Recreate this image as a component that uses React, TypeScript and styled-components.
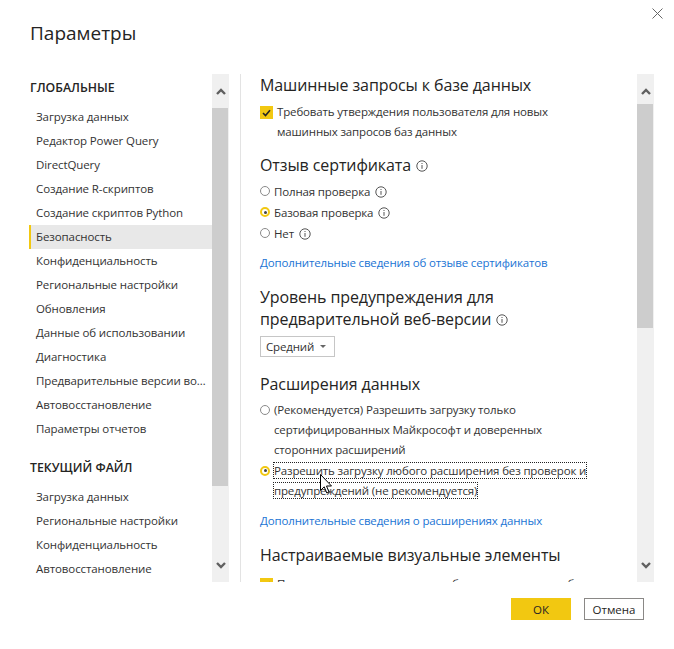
import React from "react";
import styled, { createGlobalStyle } from "styled-components";

const Global = createGlobalStyle`
  html, body { margin: 0; padding: 0; background: #fff; }
  body { font-family: "Open Sans", "Noto Sans", sans-serif; color: #252423; }
  #root { width: 674px; height: 649px; }
`;

const Dialog = styled.div`
  width: 674px;
  height: 649px;
  box-sizing: border-box;
  display: flex;
  flex-direction: column;
  padding: 0 20px 0 29px;
`;

const Header = styled.header`
  height: 74px;
  display: flex;
  justify-content: space-between;
  align-items: flex-start;
  margin-right: -20px;
`;

const Title = styled.h1`
  margin: 20px 0 0 1px;
  font-size: 19px;
  line-height: 26px;
  font-weight: 400;
  color: #252423;
`;

const CloseButton = styled.button`
  margin: 8px 11px 0 0;
  padding: 0;
  border: 0;
  background: none;
  width: 11px;
  height: 11px;
  display: flex;
`;

const Body = styled.div`
  height: 508px;
  display: flex;
`;

const LeftPane = styled.div`
  width: 200px;
  display: flex;
  flex-shrink: 0;
`;

const Nav = styled.nav`
  flex: 1;
  overflow: hidden;
`;

const NavGroupTitle = styled.div<{ $first?: boolean }>`
  height: 24px;
  line-height: 24px;
  margin: ${(p) => (p.$first ? "2px 0 5px" : "15px 0 5px")};
  padding-left: 1px;
  font-size: 12.3px;
  font-weight: 600;
  color: #252423;
`;

const NavItem = styled.div<{ $active?: boolean }>`
  height: 24px;
  line-height: 24px;
  padding: 0 6px 0 7px;
  font-size: 11.5px;
  letter-spacing: -0.1px;
  color: #333;
  white-space: nowrap;
  overflow: hidden;
  text-overflow: ellipsis;
  background: ${(p) => (p.$active ? "#e8e8e8" : "transparent")};
  box-shadow: ${(p) => (p.$active ? "inset 2px 0 0 #f2c811" : "none")};
`;

const Bar = styled.div`
  width: 17px;
  flex-shrink: 0;
  background: #f0f0f0;
  display: flex;
  flex-direction: column;
`;

const ArrowCell = styled.div`
  height: 34px;
  display: flex;
  align-items: center;
  justify-content: center;
`;

const Track = styled.div`
  flex: 1;
`;

const Thumb = styled.div<{ $top: number; $h: number }>`
  margin-top: ${(p) => p.$top}px;
  height: ${(p) => p.$h}px;
  margin-right: 1px;
  background: #cdcdcd;
`;

const Divider = styled.div`
  width: 1px;
  margin-left: 11px;
  background: #e3e3e3;
  flex-shrink: 0;
`;

const RightPane = styled.div`
  flex: 1;
  display: flex;
  min-width: 0;
`;

const Content = styled.div`
  flex: 1;
  overflow: hidden;
  padding-left: 19px;
  position: relative;
`;

const Inner = styled.div`
  max-width: 338px;
`;

const SectionTitle = styled.h2<{ $mt: number }>`
  margin: ${(p) => p.$mt}px 0 0;
  font-size: 16px;
  letter-spacing: -0.1px;
  line-height: 22px;
  font-weight: 400;
  color: #252423;
`;

const CheckRow = styled.div<{ $mt: number; $single?: boolean }>`
  margin-top: ${(p) => p.$mt}px;
  display: flex;
  align-items: flex-start;
  font-size: 11.5px;
  letter-spacing: -0.15px;
  line-height: 19.5px;
  color: #333;
  white-space: ${(p) => (p.$single ? "nowrap" : "normal")};
`;

const CheckBox = styled.span`
  width: 13px;
  height: 13px;
  flex-shrink: 0;
  margin: 4px 4px 0 0;
  background: #f2c811;
  display: flex;
  align-items: center;
  justify-content: center;
`;

const RadioGroup = styled.div<{ $mt: number; $lh: number; $gap: number }>`
  margin-top: ${(p) => p.$mt}px;
  display: flex;
  flex-direction: column;
  gap: ${(p) => p.$gap}px;
  font-size: 11.5px;
  letter-spacing: -0.15px;
  line-height: ${(p) => p.$lh}px;
  color: #333;
`;

const RadioRow = styled.div`
  display: flex;
  align-items: flex-start;
`;

const RadioDot = styled.span<{ $checked?: boolean; $lh: number }>`
  width: 10px;
  height: 10px;
  flex-shrink: 0;
  box-sizing: border-box;
  border-radius: 50%;
  margin: ${(p) => (p.$lh - 11) / 2}px 4px 0 0;
  border: ${(p) => (p.$checked ? "2px solid #f2c811" : "1.5px solid #8a8a8a")};
  background: #fff;
  display: flex;
  align-items: center;
  justify-content: center;
  &::after {
    content: "";
    width: 3px;
    height: 3px;
    border-radius: 50%;
    background: ${(p) => (p.$checked ? "#444" : "transparent")};
  }
`;

const Focused = styled.span`
  margin-left: -1px;
  border: 1px dotted #222;
  -webkit-box-decoration-break: clone;
  box-decoration-break: clone;
`;

const InfoWrap = styled.span<{ $size: number }>`
  display: inline-flex;
  vertical-align: middle;
  margin-left: 5px;
  width: ${(p) => p.$size}px;
  height: ${(p) => p.$size}px;
  position: relative;
  top: -1px;
`;

const LinkText = styled.a<{ $mt: number }>`
  display: block;
  margin-top: ${(p) => p.$mt}px;
  font-size: 11.5px;
  letter-spacing: -0.15px;
  line-height: 20px;
  color: #1a74d4;
  text-decoration: none;
`;

const Select = styled.div`
  margin-top: 6px;
  width: 75px;
  height: 21px;
  box-sizing: border-box;
  border: 1px solid #c6c6c6;
  display: flex;
  align-items: center;
  justify-content: space-between;
  padding: 0 8px 0 5px;
  font-size: 11.5px;
  letter-spacing: -0.15px;
  color: #333;
`;

const Caret = styled.span`
  width: 0;
  height: 0;
  border-left: 3px solid transparent;
  border-right: 3px solid transparent;
  border-top: 3px solid #666;
`;

const Pointer = styled.svg`
  position: absolute;
  left: 79px;
  top: 400px;
`;

const Footer = styled.footer`
  display: flex;
  justify-content: flex-end;
  gap: 13px;
  margin-top: 16px;
  padding-right: 10px;
`;

const Button = styled.button<{ $primary?: boolean }>`
  width: 60px;
  height: 22px;
  box-sizing: border-box;
  padding: 0;
  font-family: inherit;
  font-size: 11.5px;
  color: #252423;
  background: ${(p) => (p.$primary ? "#f2c811" : "#fff")};
  border: ${(p) => (p.$primary ? "none" : "1px solid #8a8886")};
`;

const Chevron = ({ up }: { up?: boolean }) => (
  <svg width="10" height="7" viewBox="0 0 10 7">
    <polyline
      points={up ? "1,6 5,2 9,6" : "1,1 5,5 9,1"}
      fill="none"
      stroke="#606060"
      strokeWidth="2.4"
    />
  </svg>
);

const Scrollbar = ({ top, h }: { top: number; h: number }) => (
  <Bar>
    <ArrowCell>
      <Chevron up />
    </ArrowCell>
    <Track>
      <Thumb $top={top} $h={h} />
    </Track>
    <ArrowCell>
      <Chevron />
    </ArrowCell>
  </Bar>
);

const Info = ({ size = 11 }: { size?: number }) => (
  <InfoWrap $size={size}>
    <svg width={size} height={size} viewBox="0 0 12 12">
      <circle cx="6" cy="6" r="5.2" fill="none" stroke="#555" strokeWidth="1" />
      <rect x="5.5" y="5" width="1" height="3.8" fill="#555" />
      <rect x="5.5" y="3" width="1" height="1" fill="#555" />
    </svg>
  </InfoWrap>
);

const Check = () => (
  <svg width="9" height="8" viewBox="0 0 9 8">
    <polyline points="1,4 3.5,6.5 8,1.2" fill="none" stroke="#252423" strokeWidth="1.6" />
  </svg>
);

const globalItems = [
  "Загрузка данных",
  "Редактор Power Query",
  "DirectQuery",
  "Создание R-скриптов",
  "Создание скриптов Python",
  "Безопасность",
  "Конфиденциальность",
  "Региональные настройки",
  "Обновления",
  "Данные об использовании",
  "Диагностика",
  "Предварительные версии возможностей",
  "Автовосстановление",
  "Параметры отчетов",
];

const fileItems = [
  "Загрузка данных",
  "Региональные настройки",
  "Конфиденциальность",
  "Автовосстановление",
];

export default function App() {
  return (
    <>
      <Global />
      <Dialog>
        <Header>
          <Title>Параметры</Title>
          <CloseButton aria-label="Закрыть">
            <svg width="11" height="11" viewBox="0 0 11 11">
              <path d="M0.5 0.5 L10.5 10.5 M10.5 0.5 L0.5 10.5" stroke="#666" strokeWidth="1" />
            </svg>
          </CloseButton>
        </Header>
        <Body>
          <LeftPane>
            <Nav>
              <NavGroupTitle $first>ГЛОБАЛЬНЫЕ</NavGroupTitle>
              {globalItems.map((t) => (
                <NavItem key={t} $active={t === "Безопасность"}>
                  {t}
                </NavItem>
              ))}
              <NavGroupTitle>ТЕКУЩИЙ ФАЙЛ</NavGroupTitle>
              {fileItems.map((t) => (
                <NavItem key={"f" + t}>{t}</NavItem>
              ))}
            </Nav>
            <Scrollbar top={0} h={378} />
          </LeftPane>
          <Divider />
          <RightPane>
            <Content>
              <Inner>
                <SectionTitle $mt={0}>Машинные запросы к базе данных</SectionTitle>
                <CheckRow $mt={6}>
                  <CheckBox>
                    <Check />
                  </CheckBox>
                  <span>Требовать утверждения пользователя для новых машинных запросов баз данных</span>
                </CheckRow>

                <SectionTitle $mt={13}>
                  Отзыв сертификата
                  <Info size={12} />
                </SectionTitle>
                <RadioGroup $mt={5} $lh={21} $gap={0}>
                  <RadioRow>
                    <RadioDot $lh={21} />
                    <span>
                      Полная проверка
                      <Info size={12} />
                    </span>
                  </RadioRow>
                  <RadioRow>
                    <RadioDot $lh={21} $checked />
                    <span>
                      Базовая проверка
                      <Info size={12} />
                    </span>
                  </RadioRow>
                  <RadioRow>
                    <RadioDot $lh={21} />
                    <span>
                      Нет
                      <Info size={12} />
                    </span>
                  </RadioRow>
                </RadioGroup>
                <LinkText $mt={9} href="#">
                  Дополнительные сведения об отзыве сертификатов
                </LinkText>

                <SectionTitle $mt={13}>
                  Уровень предупреждения для предварительной веб-версии
                  <Info size={12} />
                </SectionTitle>
                <Select>
                  <span>Средний</span>
                  <Caret />
                </Select>

                <SectionTitle $mt={16}>Расширения данных</SectionTitle>
                <RadioGroup $mt={5} $lh={20} $gap={1}>
                  <RadioRow>
                    <RadioDot $lh={20} />
                    <span>
                      (Рекомендуется) Разрешить загрузку только сертифицированных Майкрософт и доверенных
                      сторонних расширений
                    </span>
                  </RadioRow>
                  <RadioRow>
                    <RadioDot $lh={20} $checked />
                    <span>
                      <Focused>
                        Разрешить загрузку любого расширения без проверок и предупреждений (не рекомендуется)
                      </Focused>
                    </span>
                  </RadioRow>
                </RadioGroup>
                <LinkText $mt={10} href="#">
                  Дополнительные сведения о расширениях данных
                </LinkText>

                <SectionTitle $mt={13}>Настраиваемые визуальные элементы</SectionTitle>
                <CheckRow $mt={8} $single>
                  <CheckBox>
                    <Check />
                  </CheckBox>
                  <span>Показывать предупреждение о безопасности при добавлении</span>
                </CheckRow>
              </Inner>
              <Pointer width="13" height="21" viewBox="0 0 13 21">
                <path
                  d="M0.5 0.5 L0.5 16.5 L4.2 12.8 L6.8 19 L9 18 L6.5 12 L11.5 12 Z"
                  fill="#fff"
                  stroke="#000"
                  strokeWidth="1"
                  strokeLinejoin="round"
                />
              </Pointer>
            </Content>
            <Scrollbar top={-4} h={224} />
          </RightPane>
        </Body>
        <Footer>
          <Button $primary>ОК</Button>
          <Button>Отмена</Button>
        </Footer>
      </Dialog>
    </>
  );
}
